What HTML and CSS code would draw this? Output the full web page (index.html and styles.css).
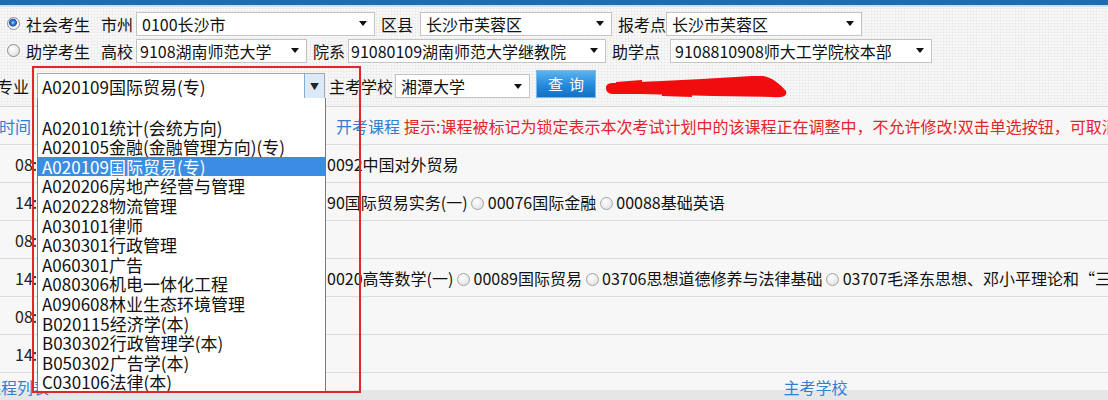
FILE: index.html
```html
<!DOCTYPE html>
<html lang="zh-CN">

<head>
  <meta charset="UTF-8" />
  <title>考试计划</title>
  <link rel="stylesheet" href="styles.css">
</head>

<body>
  <div class="topbar"></div>

  <div class="form">
    <div class="row">
      <span class="radio on"></span>
      <span class="lbl kind">社会考生</span>
      <span class="lbl w41">市州</span>
      <div class="sel city">0100长沙市</div>
      <span class="lbl w45">区县</span>
      <div class="sel county">长沙市芙蓉区</div>
      <span class="lbl w54">报考点</span>
      <div class="sel site">长沙市芙蓉区</div>
    </div>
    <div class="row">
      <span class="radio"></span>
      <span class="lbl kind">助学考生</span>
      <span class="lbl w41">高校</span>
      <div class="sel college">9108湖南师范大学</div>
      <span class="lbl w41">院系</span>
      <div class="sel dept">91080109湖南师范大学继教院</div>
      <span class="lbl w64">助学点</span>
      <div class="sel point">9108810908师大工学院校本部</div>
    </div>
    <div class="row row-major">
      <span class="lbl major">专业</span>
      <div class="sel picked">A020109国际贸易(专)</div>
      <span class="lbl w70">主考学校</span>
      <div class="sel school">湘潭大学</div>
      <button class="btn">查询</button>
      <svg class="scribble" width="186" height="24" viewBox="0 0 186 24">
        <path d="M4,13 C4,9 7,8 12,8 L60,6 L100,4 L150,1 L161,1 C170,2 179,10 184,16 C186,22 178,23 170,22 L110,21 L40,19 L12,19 C7,19 4,17 4,13 Z" fill="#f10d0d" />
        <path d="M14,8 L40,6 M60,20 L90,21" stroke="#f10d0d" stroke-width="2" />
      </svg>
    </div>
  </div>

  <div class="table">
    <div class="head">
      <span class="col-time blue">考试时间</span>
      <span class="blue course-head">开考课程</span>
      <span class="hint">提示:课程被标记为锁定表示本次考试计划中的该课程正在调整中，不允许修改!双击单选按钮，可取消</span>
    </div>
    <div class="tr">
      <span class="col-time"><span class="clip">08:30</span></span>
      <span class="courses">0092中国对外贸易</span>
    </div>
    <div class="tr">
      <span class="col-time"><span class="clip">14:30</span></span>
      <span class="courses">90国际贸易实务(一) <i class="dot"></i> 00076国际金融 <i class="dot"></i> 00088基础英语</span>
    </div>
    <div class="tr">
      <span class="col-time"><span class="clip">08:30</span></span>
      <span class="courses"></span>
    </div>
    <div class="tr">
      <span class="col-time"><span class="clip">14:30</span></span>
      <span class="courses">0020高等数学(一) <i class="dot"></i> 00089国际贸易 <i class="dot"></i> 03706思想道德修养与法律基础 <i class="dot"></i> 03707毛泽东思想、邓小平理论和“三个代表”重要思想概论</span>
    </div>
    <div class="tr">
      <span class="col-time"><span class="clip">08:30</span></span>
      <span class="courses"></span>
    </div>
    <div class="tr">
      <span class="col-time"><span class="clip">14:30</span></span>
      <span class="courses"></span>
    </div>
    <div class="foot">
      <span class="blue list-title">课程列表</span>
      <span class="blue foot-school">主考学校</span>
    </div>
  </div>

  <ul class="droplist">
    <li>&nbsp;</li>
    <li>A020101统计(会统方向)</li>
    <li>A020105金融(金融管理方向)(专)</li>
    <li class="active">A020109国际贸易(专)</li>
    <li>A020206房地产经营与管理</li>
    <li>A020228物流管理</li>
    <li>A030101律师</li>
    <li>A030301行政管理</li>
    <li>A060301广告</li>
    <li>A080306机电一体化工程</li>
    <li>A090608林业生态环境管理</li>
    <li>B020115经济学(本)</li>
    <li>B030302行政管理学(本)</li>
    <li>B050302广告学(本)</li>
    <li>C030106法律(本)</li>
  </ul>
  <div class="mark"></div>
</body>

</html>
```

FILE: styles.css
```css
body {
  margin: 0;
  width: 1108px;
  height: 400px;
  overflow: hidden;
  position: relative;
  background-color: #f6f6f6;
  color: #111;
  font-family: "Noto Sans CJK SC", "Noto Sans", sans-serif;
  font-size: 16px;
}

.topbar {
  height: 5px;
  background-color: #1d6cb2;
  border-bottom: 2px solid #c4e4f6;
}

.form {
  padding-top: 3px;
  height: 96px;
  background-color: #f7f7f7;
  background-image: radial-gradient(#e6e6e6 0.8px, transparent 1.1px);
  background-size: 3px 3px;
  border-bottom: 1px solid #d6d6d6;
}

.row {
  display: flex;
  align-items: center;
  height: 27px;
  white-space: nowrap;
}

.row-major {
  height: 40px;
  margin-top: 2px;
}

.radio {
  width: 13px;
  height: 13px;
  margin: 0 6px 0 7px;
  box-sizing: border-box;
  border-radius: 50%;
  border: 1px solid #8c8c8c;
  background: radial-gradient(circle at 40% 35%, #ffffff, #d9d9d9);
}

.radio.on {
  background: radial-gradient(circle at 45% 42%, #a8d6ff 0, #3579d8 2px, #1d4ea6 3.6px, #e9e9e9 4.2px, #ffffff 6px);
}

.lbl {
  box-sizing: border-box;
  padding-left: 6px;
  line-height: 20px;
}

.kind {
  width: 69px;
  padding-left: 0;
}

.w41 { width: 41px; }
.w45 { width: 45px; }
.w54 { width: 54px; }
.w64 { width: 64px; }
.w70 { width: 70px; padding-left: 4px; }

.major {
  width: 40px;
  margin-left: -3px;
  padding-left: 0;
}

.sel {
  box-sizing: border-box;
  height: 24px;
  display: flex;
  align-items: center;
  justify-content: space-between;
  padding: 0 7px 0 5px;
  background-color: #fff;
  border: 1px solid #c4c4c4;
  overflow: hidden;
}

.sel::after {
  content: "";
  border-left: 4px solid transparent;
  border-right: 4px solid transparent;
  border-top: 5px solid #111;
  flex: none;
}

.city { width: 239px; }
.county { width: 192px; }
.site { width: 196px; }
.college { width: 171px; padding-left: 3px; }
.dept { width: 258px; padding-left: 2px; }
.point { width: 262px; padding-left: 4px; }
.school { width: 135px; }

.picked {
  width: 288px;
  height: 27px;
  padding: 0 0 0 4px;
  font-size: 17px;
  border-color: #a9a9a9;
}

.picked::after {
  box-sizing: border-box;
  width: 20px;
  height: 25px;
  border: 0;
  border-left: 1px solid #7eaedb;
  background-color: #dceaf7;
  content: "▼";
  font-size: 9px;
  line-height: 25px;
  text-align: center;
  color: #222;
}

.btn {
  box-sizing: border-box;
  width: 60px;
  height: 28px;
  margin: -5px 0 0 6px;
  border: 1px solid #7db8e8;
  background: linear-gradient(to bottom, #5bb3f0, #2589dc 55%, #1470c4);
  color: #fff;
  font-family: inherit;
  font-size: 15px;
  letter-spacing: 6px;
  padding: 0 0 0 6px;
}

.scribble {
  margin: 2px 0 0 6px;
}

.table {
  background-color: #f7f7f7;
}

.head,
.tr {
  display: flex;
  align-items: center;
  height: 37px;
  border-bottom: 1px solid #dcdcdc;
  white-space: nowrap;
  overflow: hidden;
}

.col-time {
  box-sizing: border-box;
  width: 327px;
  flex: none;
  padding-left: 15px;
  color: #222;
}

.clip {
  display: inline-block;
  width: 21px;
  overflow: hidden;
  vertical-align: top;
}

.head .col-time {
  margin-left: -33px;
  padding-left: 0;
  width: 369px;
}

.blue {
  color: #2f80d1;
}

.course-head {
  margin-right: 4px;
}

.hint {
  color: #e5232a;
}

.courses {
  color: #111;
}

.dot {
  display: inline-block;
  width: 13px;
  height: 13px;
  box-sizing: border-box;
  border-radius: 50%;
  border: 1px solid #a4a4a4;
  background: radial-gradient(circle at 40% 35%, #ffffff, #dadada);
  vertical-align: -1px;
}

.foot {
  height: 27px;
  background: linear-gradient(to bottom, transparent 0, transparent 17px, #e6e6e6 17px);
  white-space: nowrap;
  line-height: 20px;
}

.list-title {
  display: inline-block;
  margin: 4px 0 0 -15px;
}

.foot-school {
  display: inline-block;
  margin: 4px 0 0 731px;
}

.droplist {
  position: absolute;
  left: 37px;
  top: 98px;
  width: 289px;
  margin: 0;
  padding: 0;
  list-style: none;
  box-sizing: border-box;
  background-color: #fff;
  border: 1px solid #7a7a7a;
  border-top: 0;
  font-size: 17px;
  line-height: 19.6px;
  color: #111;
}

.droplist li {
  padding-left: 4px;
  white-space: nowrap;
}

.droplist .active {
  background-color: #3b8de3;
  color: #fff;
}

.mark {
  position: absolute;
  left: 32px;
  top: 66px;
  width: 325px;
  height: 323px;
  border: 2px solid #e2262b;
}
```
